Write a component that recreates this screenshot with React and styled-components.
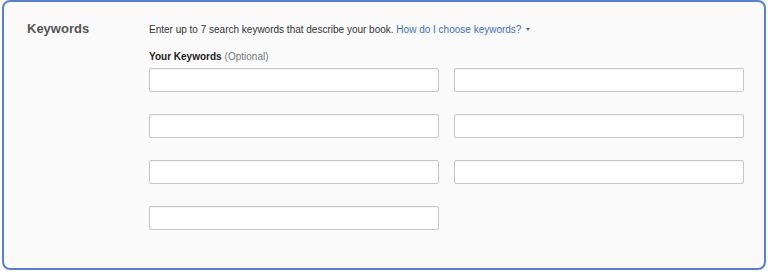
import React from "react";
import styled, { createGlobalStyle } from "styled-components";

const GlobalStyle = createGlobalStyle`
  html, body {
    margin: 0;
    padding: 0;
    background: #ffffff;
  }
  body {
    font-family: "Liberation Sans", Arial, sans-serif;
  }
`;

const Page = styled.div`
  padding: 0 2px 2px 2px;
`;

const Frame = styled.section`
  box-sizing: border-box;
  height: 270px;
  border: 2px solid #5680d8;
  border-radius: 8px;
  background: #fafafa;
  display: flex;
`;

const SideLabel = styled.h2`
  box-sizing: border-box;
  width: 145px;
  flex: none;
  margin: 0;
  padding: 19px 0 0 23px;
  font-size: 13px;
  line-height: 16px;
  font-weight: bold;
  color: #555555;
`;

const Content = styled.div`
  padding-top: 21px;
`;

const Intro = styled.p`
  margin: 0;
  font-size: 10px;
  line-height: 14px;
  color: #333333;
`;

const HelpLink = styled.a`
  color: #3b72b8;
  text-decoration: none;
  cursor: pointer;
`;

const Caret = styled.span`
  display: inline-block;
  margin-left: 5px;
  width: 0;
  height: 0;
  border-left: 2.5px solid transparent;
  border-right: 2.5px solid transparent;
  border-top: 3px solid #5a6f8e;
  vertical-align: middle;
  position: relative;
  top: -1px;
`;

const FieldLabel = styled.div`
  margin-top: 13px;
  font-size: 10px;
  line-height: 14px;
  color: #222222;
  font-weight: bold;
`;

const Optional = styled.span`
  font-weight: normal;
  color: #777777;
  margin-left: 3px;
`;

const Grid = styled.div`
  margin-top: 4px;
  display: grid;
  grid-template-columns: 290px 290px;
  column-gap: 15px;
  row-gap: 22px;
`;

const Input = styled.input`
  box-sizing: border-box;
  height: 24px;
  width: 100%;
  margin: 0;
  border: 1px solid #c6c6c6;
  border-radius: 2px;
  background: #ffffff;
  box-shadow: inset 0 1px 1px rgba(0, 0, 0, 0.04);
  font-family: inherit;
  font-size: 11px;
  padding: 0 6px;
  outline: none;
`;

export default function App() {
  return (
    <Page>
      <GlobalStyle />
      <Frame>
        <SideLabel>Keywords</SideLabel>
        <Content>
          <Intro>
            Enter up to 7 search keywords that describe your book.{" "}
            <HelpLink>How do I choose keywords?</HelpLink>
            <Caret />
          </Intro>
          <FieldLabel>
            Your Keywords<Optional>(Optional)</Optional>
          </FieldLabel>
          <Grid>
            {Array.from({ length: 7 }).map((_, i) => (
              <Input key={i} type="text" aria-label={`Keyword ${i + 1}`} />
            ))}
          </Grid>
        </Content>
      </Frame>
    </Page>
  );
}
